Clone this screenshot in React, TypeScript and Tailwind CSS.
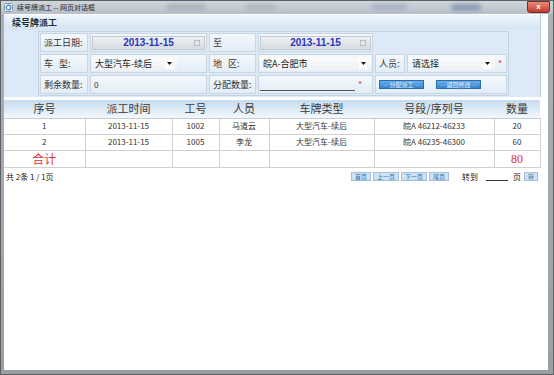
import React from "react";

const Arrow = () => (
  <svg width="5" height="3" viewBox="0 0 5 3" className="shrink-0">
    <path d="M0 0H5L2.5 3Z" fill="#111" />
  </svg>
);

const Star = () => <span className="text-[#e23b3b] text-[9px] leading-none ml-[3px]">*</span>;

const Cell = ({ children, className = "" }: { children?: React.ReactNode; className?: string }) => (
  <div
    className={`h-[19px] flex items-center border border-[#c9d6e2] bg-gradient-to-b from-[#f3f8fc] to-[#e2edf7] ${className}`}
  >
    {children}
  </div>
);

const Label = ({ children }: { children: React.ReactNode }) => (
  <Cell className="pl-[3px] text-[9px] text-[#333] whitespace-pre">{children}</Cell>
);

const DateInput = () => (
  <div className="relative mx-[1px] h-[14px] w-full flex items-center justify-center border border-[#c3c9cf] bg-gradient-to-b from-[#eef1f3] to-[#d6dbe0]">
    <span className="font-['Liberation_Sans',sans-serif] font-bold text-[10px] leading-none text-[#2d34c0]">
      2013-11-15
    </span>
    <span className="absolute right-[4px] top-[3px] w-[6px] h-[6px] border border-[#b8bec4] bg-[#e4e7ea]" />
  </div>
);

const Select = ({ text, w }: { text: string; w: string }) => (
  <div className={`ml-[1px] h-[14px] ${w} flex items-center justify-between pl-[3px] pr-[4px] bg-gradient-to-b from-[#fafbfc] to-[#eef1f4] text-[9px] leading-none text-[#222]`}>
    <span>{text}</span>
    <span className="bg-white h-[10px] w-[8px] flex items-center justify-center">
      <Arrow />
    </span>
  </div>
);

const BlueBtn = ({ text }: { text: string }) => (
  <div className="h-[9px] w-[45px] flex items-center justify-center border border-[#2b6cae] bg-gradient-to-b from-[#6aaee8] to-[#3584cf] text-[6px] leading-none text-[#e8f3ff]">
    <span className="text-[#a9d1f5] mr-[2px]">--</span>
    {text}
    <span className="text-[#a9d1f5] ml-[2px]">--</span>
  </div>
);

const PageBtn = ({ text }: { text: string }) => (
  <div className="h-[9px] px-[3px] flex items-center border border-[#a4c0dc] bg-[#cfe1f2] text-[6px] leading-none text-[#3b6fa6]">
    {text}
  </div>
);

const rows = [
  ["1", "2013-11-15", "1002", "马道云", "大型汽车-续后", "皖A 46212-46233", "20"],
  ["2", "2013-11-15", "1005", "李龙", "大型汽车-续后", "皖A 46235-46300", "60"],
];

const widths = [81, 87, 47, 50, 105, 120, 46];
const heads = ["序号", "派工时间", "工号", "人员", "车牌类型", "号段/序列号", "数量"];

export default function App() {
  return (
    <div className="w-[554px] h-[375px] flex flex-col bg-gradient-to-b from-[#aab2ba] to-[#9a9fa4] border border-[#5c6166] font-['Noto_Sans_CJK_SC',sans-serif] text-[#333] overflow-hidden">
      {/* Title bar */}
      <div className="relative h-[13px] shrink-0 flex items-center bg-gradient-to-b from-[#d0d6dc] to-[#b6c0c9]">
        <svg width="9" height="9" viewBox="0 0 9 9" className="ml-[3px]">
          <rect x="0.5" y="0.5" width="8" height="8" rx="1" fill="#f4f6f8" stroke="#8a96a3" />
          <circle cx="4.5" cy="4.5" r="2.3" fill="none" stroke="#3a7fd0" strokeWidth="1.2" />
        </svg>
        <span className="ml-[4px] text-[7px] leading-none text-[#222]">续号牌派工 -- 网页对话框</span>
        <div className="absolute left-[165px] top-[3px] w-[40px] h-[6px] rounded-full bg-[#a9b2bb] blur-[2px]" />
        <div className="absolute left-[245px] top-[3px] w-[30px] h-[6px] rounded-full bg-[#b0b8c0] blur-[2px]" />
        <div className="absolute left-[370px] top-[3px] w-[36px] h-[6px] rounded-full bg-[#a8b3c2] blur-[2px]" />
        <div className="absolute left-[450px] top-[3px] w-[30px] h-[7px] rounded-full bg-[#8a9cb4] blur-[2px]" />
        <div className="absolute right-[3px] top-0 w-[23px] h-[12px] rounded-b-[3px] border border-[#7a2a22] bg-gradient-to-b from-[#e88a7c] to-[#c2392b] flex items-center justify-center">
          <span className="text-white text-[8px] font-bold leading-none font-['Liberation_Sans',sans-serif]">x</span>
        </div>
      </div>

      {/* Client */}
      <div className="flex-1 ml-[3px] mr-[5px] mb-[4px] bg-white flex">
        <div className="w-[537px] flex flex-col">
          {/* Panel */}
          <div className="h-[83px] shrink-0 bg-[#dce9f6] border-r border-[#b9cadb] flex flex-col">
            <div className="h-[16px] shrink-0 flex items-center pl-[8px] border-t border-white bg-gradient-to-b from-[#eef5fb] to-[#d3e4f4]">
              <span className="text-[9px] font-bold leading-none text-[#1d2a38]">续号牌派工</span>
            </div>
            <div className="pl-[34px] pt-[1px]">
              <div className="w-[471px] border border-[#c3d3e2] p-[1px] grid grid-cols-[48px_117px_47px_115px_30px_100px] grid-rows-[19px_19px_19px] gap-[2px]">
                <Label>派工日期:</Label>
                <Cell>
                  <DateInput />
                </Cell>
                <Label>至</Label>
                <Cell>
                  <DateInput />
                </Cell>
                <div />
                <div />

                <Label>
                  车<span className="inline-block w-[6px]" />型:
                </Label>
                <Cell>
                  <Select text="大型汽车-续后" w="w-[85px]" />
                </Cell>
                <Label>
                  地<span className="inline-block w-[6px]" />区:
                </Label>
                <Cell>
                  <Select text="皖A-合肥市" w="w-[111px]" />
                </Cell>
                <Label>人员:</Label>
                <Cell>
                  <Select text="请选择" w="w-[86px]" />
                  <Star />
                </Cell>

                <Label>剩余数量:</Label>
                <Cell className="pl-[3px] text-[8px]">0</Cell>
                <Label>分配数量:</Label>
                <Cell>
                  <div className="ml-[1px] w-[95px] h-[12px] border-b border-[#555]" />
                  <Star />
                </Cell>
                <Cell className="col-span-2 pl-[3px] gap-[12px]">
                  <BlueBtn text="分配派工" />
                  <BlueBtn text="返回修改" />
                </Cell>
              </div>
            </div>
          </div>

          {/* Table */}
          <table className="mt-[3px] table-fixed border-collapse w-[536px]">
            <colgroup>
              {widths.map((w, i) => (
                <col key={i} style={{ width: w }} />
              ))}
            </colgroup>
            <thead>
              <tr className="h-[18px] bg-gradient-to-b from-[#c6dbef] to-[#f3f8fc]">
                {heads.map((h) => (
                  <th key={h} className="p-0 font-normal text-[11px] leading-none text-[#3a3a3a] border-b border-[#c4ccd4]">
                    {h}
                  </th>
                ))}
              </tr>
            </thead>
            <tbody>
              {rows.map((r) => (
                <tr key={r[0]} className="h-[16px]">
                  {r.map((c, i) => (
                    <td key={i} className="p-0 text-center text-[8px] leading-none text-[#333] border-b border-r border-[#d0d0d0]">
                      {c}
                    </td>
                  ))}
                </tr>
              ))}
              <tr className="h-[17px]">
                <td className="p-0 text-center text-[12px] leading-none text-[#e0333c] border-b border-r border-[#d0d0d0]">合计</td>
                {[0, 1, 2, 3, 4].map((i) => (
                  <td key={i} className="p-0 border-b border-r border-[#d0d0d0]" />
                ))}
                <td className="p-0 text-center text-[12px] leading-none text-[#e0333c] font-['Liberation_Serif',serif] border-b border-r border-[#d0d0d0]">80</td>
              </tr>
            </tbody>
          </table>

          {/* Pagination */}
          <div className="h-[18px] flex items-center">
            <span className="ml-[2px] text-[8px] leading-none text-[#222] whitespace-pre">共 2条 1 / 1页</span>
            <div className="ml-auto mr-[3px] flex items-center">
              <div className="flex items-center gap-[2px]">
                <PageBtn text="首页" />
                <PageBtn text="上一页" />
                <PageBtn text="下一页" />
                <PageBtn text="尾页" />
              </div>
              <span className="ml-[13px] text-[8px] leading-none text-[#222]">转到</span>
              <div className="ml-[8px] w-[22px] h-[8px] border-b border-[#333]" />
              <span className="ml-[5px] text-[8px] leading-none text-[#222]">页</span>
              <div className="ml-[3px]">
                <PageBtn text="转" />
              </div>
            </div>
          </div>
        </div>
      </div>
    </div>
  );
}
